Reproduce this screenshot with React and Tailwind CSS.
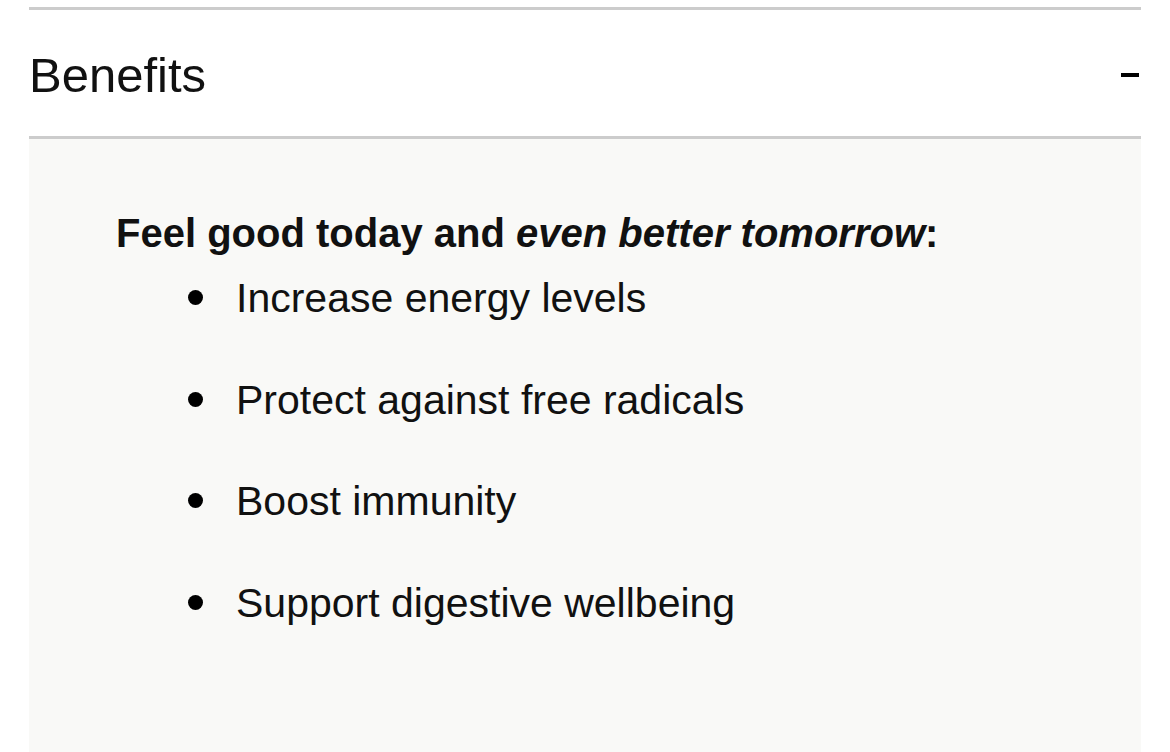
import React from "react";

const benefits = [
  "Increase energy levels",
  "Protect against free radicals",
  "Boost immunity",
  "Support digestive wellbeing",
];

const App = () => {
  return (
    <div className="h-screen flex flex-col bg-white px-[29px] pt-[7px] text-[#111] font-['Liberation_Sans',Arial,sans-serif]">
      {/* accordion header */}
      <div className="border-t-[3px] border-b-[3px] border-[#cccccc] h-[132px] flex items-center justify-between">
        <h2 className="text-[49px] leading-none font-normal mt-[4px]">Benefits</h2>
        <span className="block w-[18px] h-[4px] bg-black mr-[2px] mt-[3px]" />
      </div>

      {/* accordion body */}
      <div className="flex-1 bg-[#f9f9f7] pt-[61px] pl-[87px]">
        <p className="text-[40px] leading-[66px] font-semibold">
          Feel good today and <em>even better tomorrow</em>:
        </p>
        <ul className="flex flex-col gap-[36px]">
          {benefits.map((item) => (
            <li key={item} className="flex items-center text-[41px] leading-[65.5px]">
              <span className="block w-[15px] h-[15px] rounded-full bg-black ml-[72px] mr-[33px] mt-[-2px]" />
              {item}
            </li>
          ))}
        </ul>
      </div>
    </div>
  );
};

export default App;
